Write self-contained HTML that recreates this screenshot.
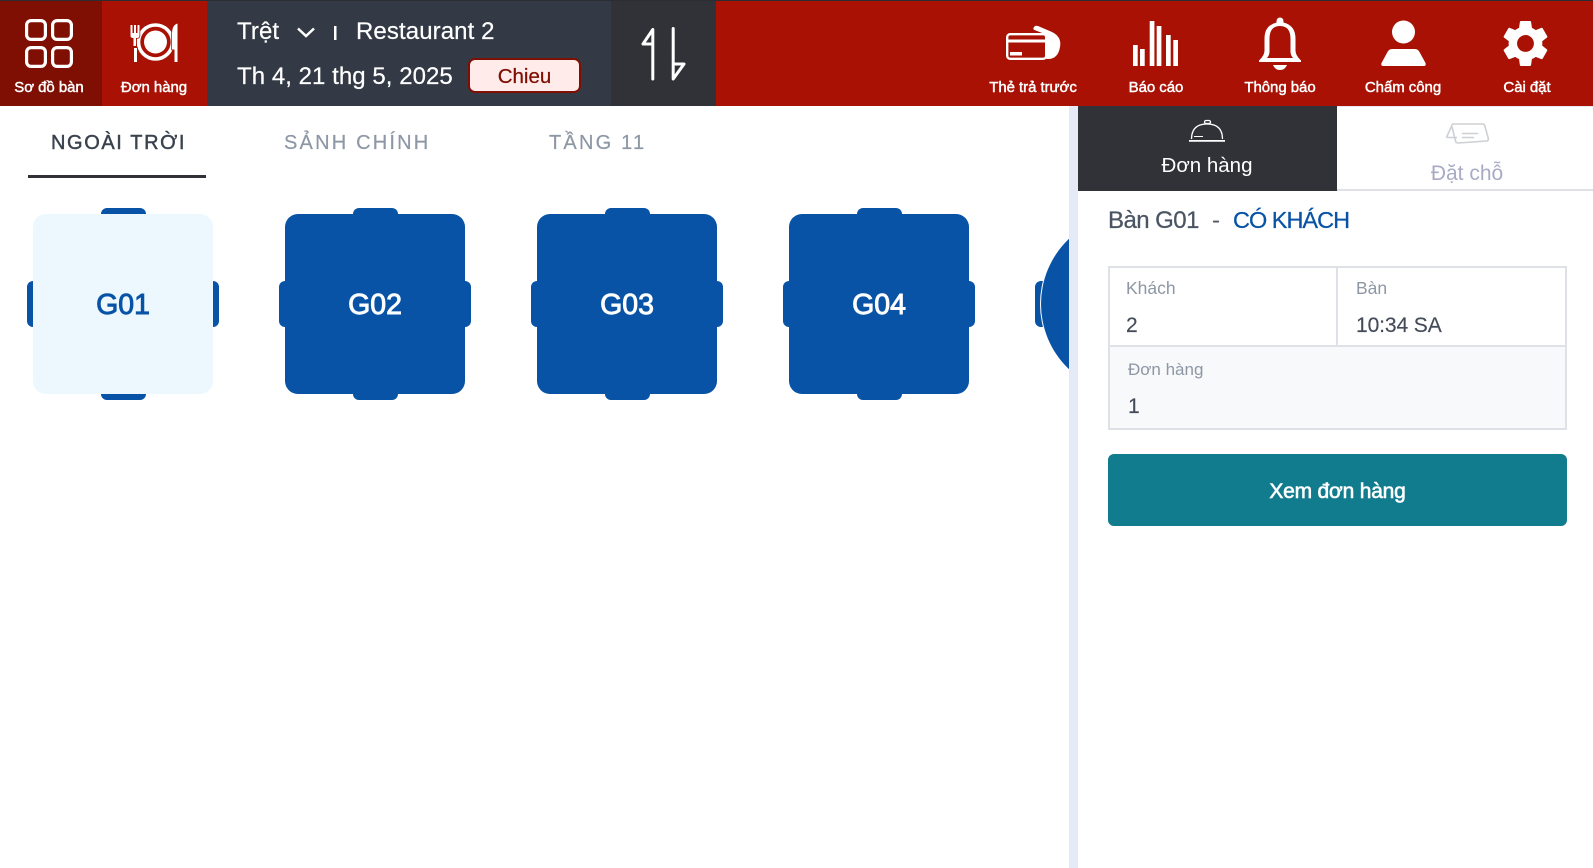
<!DOCTYPE html>
<html lang="vi"><head><meta charset="utf-8"><title>Sơ đồ bàn</title>
<style>
*{box-sizing:border-box;margin:0;padding:0}
html,body{width:1593px;height:868px;overflow:hidden;background:#fff;font-family:"Liberation Sans",sans-serif}
.a{position:absolute;white-space:nowrap;line-height:1}
.c{transform:translateX(-50%)}
.b{position:absolute}
.lbl{font-size:15px;color:#fff;-webkit-text-stroke:.45px #fff;top:80px;letter-spacing:-.05px}
.tbl{position:absolute;width:180px;height:180px;top:214px;background:#0853a6;border-radius:13px;color:#fff;font-size:28.5px;-webkit-text-stroke:.9px currentColor;text-align:center;line-height:183px}
.h{position:absolute;background:#0853a6;border-radius:6px}
.tab{top:133px;font-size:20px;letter-spacing:2.2px;color:#8d97a5;-webkit-text-stroke:.2px currentColor}
.k{font-size:17.5px;color:#8d97a5}
.v{font-size:21px;color:#454c59;-webkit-text-stroke:.15px currentColor}
</style></head><body>
<div class="b" style="left:0;top:0;width:1593px;height:106px;background:#a81103"></div>
<div class="b" style="left:0;top:0;width:1593px;height:1px;background:#2b2d33"></div>
<div class="b" style="left:0;top:1px;width:102px;height:105px;background:#7f0f03"></div>
<div class="b" style="left:207px;top:1px;width:404px;height:105px;background:#333a45"></div>
<div class="b" style="left:611px;top:1px;width:105px;height:105px;background:#313237"></div>

<svg class="b" style="left:0;top:0" width="1593" height="106" viewBox="0 0 1593 106">
<g fill="none" stroke="#fff" stroke-width="3.2">
<rect x="26.600" y="20.600" width="18.800" height="18.800" rx="4.500"/><rect x="52.600" y="20.600" width="18.800" height="18.800" rx="4.500"/>
<rect x="26.600" y="47.600" width="18.800" height="18.800" rx="4.500"/><rect x="52.600" y="47.600" width="18.800" height="18.800" rx="4.500"/>
<circle cx="155.500" cy="42" r="17" stroke-width="3.600"/>
</g>
<circle cx="155.500" cy="42" r="11.500" fill="#fff"/>
<path d="M130.500 25h2v8h1.500v-8h2v8h1.500v-8h2v11q0 2-3 2h-.500v8h-2.500v-8q-3 0-3-2zM134 48h3v14h-3zM172 34q0-9 5.500-10.500v26h-5.500zM174.500 49.500h3v12.500h-3z" fill="#fff" stroke="#a81103" stroke-width="1.500" paint-order="stroke"/>
<path d="M652.800 79V29.500L643 44H652.800M673.200 28.500V79L684 64H673.200" fill="none" stroke="#fff" stroke-width="3" stroke-linejoin="round" stroke-linecap="round"/>
<path d="M298 28.500l8 7.500 8-7.500" fill="none" stroke="#fff" stroke-width="2.500"/>
<rect x="334" y="26" width="2.500" height="14" fill="#fff"/>

<rect x="1007.200" y="34.200" width="39" height="24.600" rx="3" fill="none" stroke="#fff" stroke-width="2.400"/>
<rect x="1007" y="39.500" width="39" height="3" fill="#fff"/>
<rect x="1010" y="52" width="12" height="3.500" fill="#fff"/>
<path d="M1033.500 28q1-3 4.500-2l14 6q10 5 8 15q-2 12-12 12h-1.500V37q0-2-3-3.500l-9-3.500q-1.500-.5-1-2z" fill="#fff"/>
<path d="M1133 45h4.700v21h-4.700zM1140 49h4.700v17H1140zM1149.700 21h4.700v45h-4.700zM1156.700 26h4.700v40h-4.700zM1166 35h4.700v31H1166zM1173.300 40h4.700v26h-4.700z" fill="#fff"/>
<path d="M1280 17.500a3.500 3.500 0 0 1 3.500 3.500v1.500q12 3 12 16v12q0 5 5.500 10v1.500h-42v-1.500q5.500-5 5.500-10v-12q0-13 12-16V21a3.500 3.500 0 0 1 3.500-3.500zm0 8.500q-10.500 0-10.500 13v13q0 3-2.500 6h26q-2.500-3-2.500-6V39q0-13-10.500-13zM1273 65h14q-2 5-7 5t-7-5z" fill="#fff" fill-rule="evenodd"/>
<circle cx="1403.500" cy="32" r="11.500" fill="#fff"/>
<path d="M1392 49h23q3 0 4.500 3l6 11q1 3-2 3h-40q-3 0-2-3l6-11q1.500-3 4.500-3z" fill="#fff"/>
<path transform="translate(1497.400 15.400) scale(2.340)" fill="#fff" d="M19.140 12.940c.04-.3.06-.61.06-.94 0-.32-.02-.64-.07-.94l2.030-1.580c.18-.14.23-.41.12-.61l-1.920-3.320c-.12-.22-.37-.29-.59-.22l-2.390.96c-.5-.38-1.030-.7-1.620-.94l-.36-2.540c-.04-.24-.24-.41-.48-.41h-3.840c-.24 0-.43.17-.47.41l-.36 2.540c-.59.24-1.130.57-1.620.94l-2.390-.96c-.22-.08-.47 0-.59.22L2.740 8.870c-.12.21-.08.47.12.61l2.030 1.580c-.05.3-.09.63-.09.94s.02.64.07.94l-2.030 1.580c-.18.14-.23.41-.12.61l1.920 3.320c.12.22.37.29.59.22l2.390-.96c.5.38 1.030.7 1.620.94l.36 2.540c.05.24.24.41.48.41h3.840c.24 0 .44-.17.47-.41l.36-2.540c.59-.24 1.130-.56 1.620-.94l2.390.96c.22.08.47 0 .59-.22l1.920-3.320c.12-.22.07-.47-.12-.61l-2.010-1.580zM12 15.600c-1.980 0-3.600-1.620-3.600-3.600s1.620-3.600 3.600-3.600 3.600 1.620 3.600 3.600-1.620 3.600-3.600 3.600z"/>
</svg>

<div class="a lbl c" style="left:49px">Sơ đồ bàn</div>
<div class="a lbl c" style="left:154px">Đơn hàng</div>
<div class="a" style="left:237px;top:20px;font-size:24px;letter-spacing:.1px;color:#fff;-webkit-text-stroke:.2px #fff">Trệt</div>
<div class="a" style="left:356px;top:20px;font-size:24px;letter-spacing:.1px;color:#fff;-webkit-text-stroke:.2px #fff">Restaurant 2</div>
<div class="a" style="left:237px;top:65px;font-size:24px;letter-spacing:.05px;color:#fff;-webkit-text-stroke:.2px #fff">Th 4, 21 thg 5, 2025</div>
<div class="b" style="left:468px;top:58px;width:113px;height:35px;background:#ffecea;border:2px solid #7f0f03;border-radius:7px;color:#7f0f03;font-size:20.500px;-webkit-text-stroke:.25px #7f0f03;text-align:center;line-height:34px">Chieu</div>
<div class="a lbl c" style="left:1033px">Thẻ trả trước</div>
<div class="a lbl c" style="left:1156px">Báo cáo</div>
<div class="a lbl c" style="left:1280px">Thông báo</div>
<div class="a lbl c" style="left:1403px">Chấm công</div>
<div class="a lbl c" style="left:1527px">Cài đặt</div>

<div class="a tab" style="left:51px;letter-spacing:1.600px;color:#3a424e;-webkit-text-stroke:.45px #3a424e">NGOÀI TRỜI</div>
<div class="a tab" style="left:284px">SẢNH CHÍNH</div>
<div class="a tab" style="left:549px">TẦNG 11</div>
<div class="b" style="left:28px;top:175px;width:178px;height:3px;background:#313237"></div>

<div class="h" style="left:100.500px;top:208px;width:45px;height:192px"></div>
<div class="h" style="left:27px;top:281px;width:192px;height:46px"></div>
<div class="tbl" style="left:33px;background:#ecf8fe;color:#0853a6">G01</div>
<div class="h" style="left:352.500px;top:208px;width:45px;height:192px"></div>
<div class="h" style="left:279px;top:281px;width:192px;height:46px"></div>
<div class="tbl" style="left:285px">G02</div>
<div class="h" style="left:604.500px;top:208px;width:45px;height:192px"></div>
<div class="h" style="left:531px;top:281px;width:192px;height:46px"></div>
<div class="tbl" style="left:537px">G03</div>
<div class="h" style="left:856.500px;top:208px;width:45px;height:192px"></div>
<div class="h" style="left:783px;top:281px;width:192px;height:46px"></div>
<div class="tbl" style="left:789px">G04</div>
<div class="h" style="left:1035px;top:281px;width:30px;height:46px"></div>
<div class="b" style="left:1041px;top:214px;width:180px;height:180px;background:#0853a6;border-radius:50%;box-shadow:0 0 0 1px #fff"></div>

<div class="b" style="left:1069px;top:106px;width:524px;height:762px;background:#fff"></div>
<div class="b" style="left:1069px;top:106px;width:9px;height:762px;background:#e6eaf6"></div>
<div class="b" style="left:1078px;top:106px;width:259px;height:85px;background:#313237"></div>
<div class="b" style="left:1337px;top:189px;width:256px;height:2px;background:#dfe1e7"></div>
<div class="b" style="left:1337px;top:106px;width:256px;height:1px;background:#e9ebef"></div>
<svg class="b" style="left:1078px;top:106px" width="515" height="50" viewBox="1078 106 515 50">
<g fill="none" stroke="#fff" stroke-width="1.300"><path d="M1191.500 139q0-15 15.500-15q15.500 0 15.500 15"/><rect x="1204.500" y="120.500" width="6" height="3" rx="1.500"/></g>
<path d="M1189 140h36v1.800h-36zM1194 136h9v1h-9z" fill="#fff"/>
<g fill="none" stroke="#cdd0d4" stroke-width="1.600" stroke-linejoin="round"><path d="M1446.500 137.500l6-13.500h30q1.800 0 2.200 1.500l3.500 12.500q.5 3-1.500 3l-28.500 2q-2 0-2.500-1.500l-3.700-14.500M1446.500 137.500h10.500"/><path d="M1462.500 133.500h15M1462.500 137.500h11" stroke-linecap="round"/></g>
</svg>
<div class="a c" style="left:1207px;top:156px;font-size:20.500px;color:#fff">Đơn hàng</div>
<div class="a c" style="left:1467px;top:163px;font-size:21px;color:#a9abc5">Đặt chỗ</div>
<div class="a" style="left:1108px;top:209px;font-size:24px;letter-spacing:-.55px;color:#4b5563;-webkit-text-stroke:.25px currentColor">Bàn G01</div>
<div class="a" style="left:1212px;top:209px;font-size:24px;color:#4b5563">-</div>
<div class="a" style="left:1233px;top:209px;font-size:23.500px;letter-spacing:-1px;color:#0853a6;-webkit-text-stroke:.25px currentColor">CÓ KHÁCH</div>

<div class="b" style="left:1108px;top:266px;width:459px;height:164px;border:2px solid #dee2e6"></div>
<div class="b" style="left:1336px;top:266px;width:2px;height:80px;background:#dee2e6"></div>
<div class="b" style="left:1110px;top:345px;width:455px;height:83px;background:#f8f9fa;border-top:2px solid #dee2e6"></div>
<div class="a k" style="left:1126px;top:280px">Khách</div>
<div class="a k" style="left:1356px;top:280px">Bàn</div>
<div class="a v" style="left:1126px;top:315px">2</div>
<div class="a v" style="left:1356px;top:315px;letter-spacing:-.1px">10:34 SA</div>
<div class="a k" style="left:1128px;top:361px;font-size:17px">Đơn hàng</div>
<div class="a v" style="left:1128px;top:396px">1</div>
<div class="b" style="left:1108px;top:454px;width:459px;height:72px;background:#127c8f;border-radius:6px;color:#fff;font-size:21px;letter-spacing:-.2px;-webkit-text-stroke:.6px #fff;text-align:center;line-height:75px">Xem đơn hàng</div>
</body></html>
